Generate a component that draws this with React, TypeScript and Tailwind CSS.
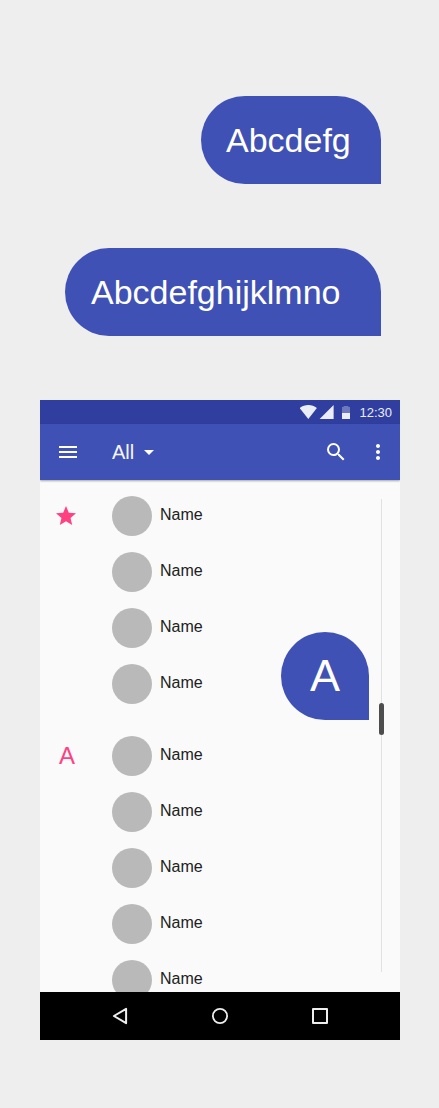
const firstGroup = ["Name", "Name", "Name", "Name"];
const secondGroup = ["Name", "Name", "Name", "Name", "Name"];

function Bubble({ text, className }: { text: string; className: string }) {
  return (
    <div
      className={`flex h-[88px] items-center rounded-[44px] rounded-br-none bg-[#3f51b5] text-[34px] leading-none text-white ${className}`}
    >
      {text}
    </div>
  );
}

function Contact({ name }: { name: string }) {
  return (
    <li className="flex h-14 shrink-0 items-center gap-2">
      <span className="size-10 rounded-full bg-[#b9b9b9]" />
      <span className="pb-0.5 text-base leading-5 text-[#212121]">{name}</span>
    </li>
  );
}

function StatusBar() {
  return (
    <div className="flex h-6 items-center justify-end bg-[#303f9f] pr-2 text-white">
      <svg width="52" height="24" viewBox="0 0 52 24" className="mr-[7px]">
        <path d="M-.3 8.1C2.2 6 5 5 8.3 5s6.1 1 8.6 3.1L8.3 19z" fill="#fff" fillOpacity=".9" />
        <path d="M33.6 5v14H19.6z" fill="#fff" fillOpacity=".9" />
        <path d="M42 7h1.6V6h4.8v1H50v6h-8z" fill="#fff" fillOpacity=".3" />
        <path d="M42 13h8v6h-8z" fill="#fff" fillOpacity=".9" />
      </svg>
      <span className="text-[13px] leading-none opacity-90">12:30</span>
    </div>
  );
}

function Toolbar() {
  return (
    <header className="relative flex h-14 items-center bg-[#3f51b5] pl-4 pr-2.5 text-white shadow-[0_1px_2px_rgba(0,0,0,0.35)]">
      <svg width="24" height="24" viewBox="0 0 24 24" fill="currentColor">
        <path d="M3 18h18v-2H3v2zm0-5h18v-2H3v2zm0-7v2h18V6H3z" />
      </svg>
      <span className="ml-8 text-xl leading-none opacity-95">All</span>
      <svg width="24" height="24" viewBox="0 0 24 24" fill="currentColor" className="ml-[3px]">
        <path d="M7 10l5 5 5-5z" />
      </svg>
      <svg width="24" height="24" viewBox="0 0 24 24" fill="currentColor" className="ml-auto">
        <path d="M15.5 14h-.79l-.28-.27A6.47 6.47 0 0 0 16 9.5 6.5 6.5 0 1 0 9.5 16c1.61 0 3.09-.59 4.23-1.57l.27.28v.79l5 4.99L20.49 19l-4.99-5zm-6 0C7.01 14 5 11.99 5 9.5S7.01 5 9.5 5 14 7.01 14 9.5 11.99 14 9.5 14z" />
      </svg>
      <svg width="24" height="24" viewBox="0 0 24 24" fill="currentColor" className="ml-[18px]">
        <path d="M12 8c1.1 0 2-.9 2-2s-.9-2-2-2-2 .9-2 2 .9 2 2 2zm0 2c-1.1 0-2 .9-2 2s.9 2 2 2 2-.9 2-2-.9-2-2-2zm0 6c-1.1 0-2 .9-2 2s.9 2 2 2 2-.9 2-2-.9-2-2-2z" />
      </svg>
    </header>
  );
}

function NavigationBar() {
  return (
    <nav className="flex h-12 items-center justify-center gap-[76px] bg-black">
      <svg width="24" height="24" viewBox="0 0 24 24" fill="none" stroke="#eee" strokeWidth="2" strokeLinejoin="round">
        <path d="M18.1 4.8v14.4L5.9 12z" />
      </svg>
      <svg width="24" height="24" viewBox="0 0 24 24" fill="none" stroke="#eee" strokeWidth="1.8">
        <circle cx="12" cy="12" r="7.1" />
      </svg>
      <svg width="24" height="24" viewBox="0 0 24 24" fill="none" stroke="#eee" strokeWidth="2" strokeLinejoin="round">
        <path d="M5 5h14v14H5z" />
      </svg>
    </nav>
  );
}

export default function App() {
  return (
    <main className="flex h-[1108px] w-[439px] flex-col bg-[#eee] pt-24 font-['Liberation_Sans',Arial,sans-serif]">
      <div className="flex w-[380.5px] flex-col items-end gap-16">
        <Bubble text="Abcdefg" className="w-[179.5px] pl-[25px]" />
        <Bubble text="Abcdefghijklmno" className="w-[315.5px] pl-[26px]" />
      </div>

      <section className="ml-10 mt-16 flex h-[640px] w-[360px] flex-col overflow-hidden bg-[#fafafa]">
        <StatusBar />
        <Toolbar />
        <div className="relative h-[512px] overflow-hidden pt-2">
          <div className="flex h-56">
            <div className="w-[72px] pl-3.5 pt-4">
              <svg width="24" height="24" viewBox="0 0 24 24" fill="#ff4081">
                <path d="M12 17.27L18.18 21l-1.64-7.03L22 9.24l-7.19-.61L12 2 9.19 8.63 2 9.24l5.46 4.73L5.82 21z" />
              </svg>
            </div>
            <ul>
              {firstGroup.map((name, i) => (
                <Contact key={i} name={name} />
              ))}
            </ul>
          </div>
          <div className="mt-4 flex">
            <div className="w-[72px] pl-[19px] pt-4 text-2xl leading-6 text-[#ff4081]">A</div>
            <ul>
              {secondGroup.map((name, i) => (
                <Contact key={i} name={name} />
              ))}
            </ul>
          </div>

          <div className="absolute left-[341px] top-[19px] h-[473px] w-px bg-[#e1e1e1]" />
          <div className="absolute left-[339px] top-[223px] h-8 w-[5px] rounded-full bg-[#4d4d4d]" />
          <div className="absolute left-[241px] top-[152px] flex size-[88px] items-center justify-center rounded-full rounded-br-none bg-[#3f51b5] pb-px text-[45px] leading-none text-white">
            A
          </div>
        </div>
        <NavigationBar />
      </section>
    </main>
  );
}
